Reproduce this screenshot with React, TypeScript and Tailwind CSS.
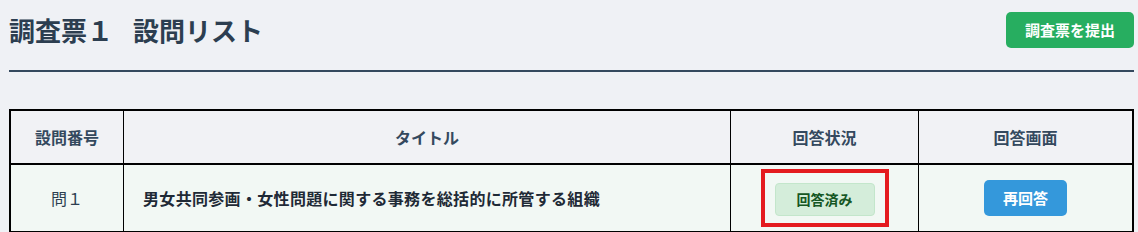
import React from "react";

export default function App() {
  const font = { fontFamily: '"Noto Sans CJK JP", "Noto Sans", sans-serif' };
  return (
    <div
      className="w-full h-[232px] overflow-hidden bg-[#eff1f5] pl-[9px] pr-[4px] pt-[12px] text-[#2c3e50]"
      style={font}
    >
      <div className="flex h-[36px] items-center justify-between">
        <h1 className="flex text-[26px] leading-none font-bold text-[#2c3e50]">
          <span>調査票１</span>
          <span className="ml-[20px]">設問リスト</span>
        </h1>
        <button className="h-[36px] w-[128px] rounded-[5px] bg-[#27ae60] text-[15px] font-bold text-white">
          調査票を提出
        </button>
      </div>
      <div className="mt-[22px] h-[2px] bg-[#34495e]" />
      <div className="mt-[37px] border-2 border-black">
        <div className="flex h-[54px] border-b-2 border-black bg-[#f1f2f5] text-[16px] font-bold text-[#34495e]">
          <div className="flex w-[112px] items-center justify-center">設問番号</div>
          <div className="flex w-[607px] items-center justify-center border-l border-black">タイトル</div>
          <div className="flex w-[188px] items-center justify-center border-l border-black">回答状況</div>
          <div className="flex flex-1 items-center justify-center border-l border-black">回答画面</div>
        </div>
        <div className="flex h-[66px] bg-[#f2f8f4] text-[16px]">
          <div className="flex w-[112px] items-center justify-center text-[#2c3e50]">問１</div>
          <div className="flex w-[607px] items-center border-l border-black pl-[19px] font-bold tracking-[0.02em] text-[#1f2a36]">
            男女共同参画・女性問題に関する事務を総括的に所管する組織
          </div>
          <div className="flex w-[188px] items-center justify-center border-l border-black">
            <div className="border-4 border-[#e41b1f] px-[10px] pt-[10px] pb-[7px]">
              <div className="flex h-[33px] w-[100px] items-center justify-center rounded-[4px] border border-[#c3e6cb] bg-[#d4edda] text-[14px] font-bold text-[#155724]">
                回答済み
              </div>
            </div>
          </div>
          <div className="flex flex-1 items-center justify-center border-l border-black">
            <button className="h-[36px] w-[83px] rounded-[5px] bg-[#3498db] text-[15px] font-bold text-white">
              再回答
            </button>
          </div>
        </div>
      </div>
    </div>
  );
}
